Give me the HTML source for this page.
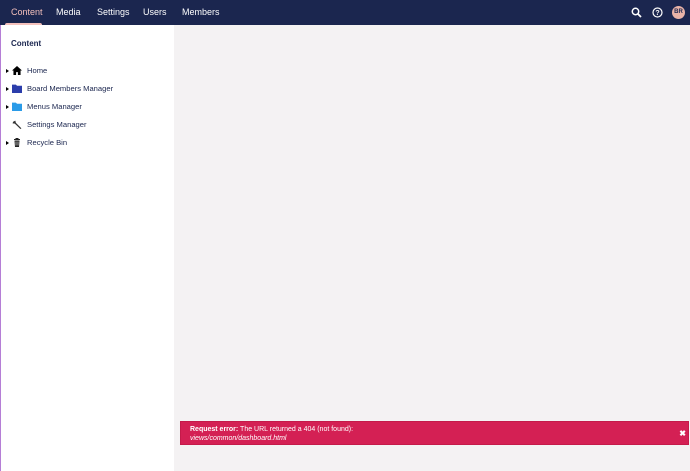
<!DOCTYPE html>
<html><head><style>
*{margin:0;padding:0;box-sizing:border-box}
body{width:690px;height:471px;overflow:hidden;font-family:"Liberation Sans",sans-serif;background:#f4f2f3;position:relative}
.top{position:absolute;left:0;top:0;width:690px;height:25px;background:#1b264f}
.top span{position:absolute;top:7px;font-size:9px;color:#fff}
.ul{position:absolute;left:5px;top:23px;width:37px;height:2px;background:#f5c1bc;border-radius:2px 2px 0 0}
.side{position:absolute;left:0;top:25px;width:174px;height:446px;background:#fff;border-left:1px solid #b57ed6}
.side h3{position:absolute;left:10px;top:14px;font-size:8px;font-weight:bold;color:#1b264f}
.it{position:absolute;left:0;font-size:7.6px;color:#1b264f;height:12px}
.it .c{position:absolute;left:5px;top:3px;width:0;height:0;border-left:3px solid #000;border-top:2.5px solid transparent;border-bottom:2.5px solid transparent}
.it .i{position:absolute;left:11px;top:0;width:10px;height:9px}
.it .t{position:absolute;left:26px;top:0;white-space:nowrap}
.err{position:absolute;left:180px;top:421px;width:509px;height:24px;background:#d42054;border:1px solid #c41a4a;color:#fff;font-size:7px;padding:3px 9px;line-height:9px}
.x{position:absolute;right:2px;top:7px;font-weight:bold;font-size:8px}
</style></head><body>
<div class="top">
<span style="left:11px;color:#f5c1bc">Content</span>
<span style="left:56px">Media</span>
<span style="left:97px">Settings</span>
<span style="left:143px">Users</span>
<span style="left:182px">Members</span>
<div class="ul"></div>
<svg style="position:absolute;left:631px;top:7px" width="11" height="11" viewBox="0 0 11 11"><circle cx="4.5" cy="4.5" r="3.2" stroke="#fff" stroke-width="1.5" fill="none"/><path d="M7 7L10 10" stroke="#fff" stroke-width="1.8"/></svg>
<svg style="position:absolute;left:652px;top:7px" width="11" height="11" viewBox="0 0 11 11"><circle cx="5.5" cy="5.5" r="4.5" stroke="#fff" stroke-width="1.2" fill="none"/><text x="5.5" y="8" font-size="7" font-weight="bold" fill="#fff" text-anchor="middle" font-family="Liberation Sans">?</text></svg>
<div style="position:absolute;left:672px;top:6px;width:13px;height:13px;border-radius:50%;background:#e9b3a8;color:#1b264f;font-size:6px;font-weight:bold;text-align:center;line-height:13px">BR</div>
</div>
<div class="side">
<h3>Content</h3>
<div class="it" style="top:41px"><div class="c"></div><svg class="i" viewBox="0 0 9 8"><path d="M4.5 0L0 4h1.3v4h2.4V5.5h1.6V8h2.4V4H9z" fill="#000"/></svg><span class="t">Home</span></div>
<div class="it" style="top:59px"><div class="c"></div><svg class="i" viewBox="0 0 9 8"><path d="M0 0.5h3.5l1 1H9V8H0z" fill="#2b3dab"/></svg><span class="t">Board Members Manager</span></div>
<div class="it" style="top:77px"><div class="c"></div><svg class="i" viewBox="0 0 9 8"><path d="M0 0.5h3.5l1 1H9V8H0z" fill="#2a9be8"/></svg><span class="t">Menus Manager</span></div>
<div class="it" style="top:95px"><svg class="i" viewBox="0 0 9 8"><path d="M1 1.5L3 0.5 3.5 2.5 8.5 7.5 7.5 8 2.5 3.2 0.5 3z" fill="#333"/></svg><span class="t">Settings Manager</span></div>
<div class="it" style="top:113px"><div class="c"></div><svg class="i" viewBox="0 0 9 9"><path d="M1.5 1h6v1h-6zM3 0h3v1H3zM2 2.5h5l-.5 6.5h-4z" fill="#222"/><path d="M3.5 3.5v4M5.5 3.5v4" stroke="#fff" stroke-width=".6"/></svg><span class="t">Recycle Bin</span></div>
</div>
<div class="err"><b>Request error:</b> The URL returned a 404 (not found):<br><i>views/common/dashboard.html</i><span class="x">✖</span></div>
</body></html>
